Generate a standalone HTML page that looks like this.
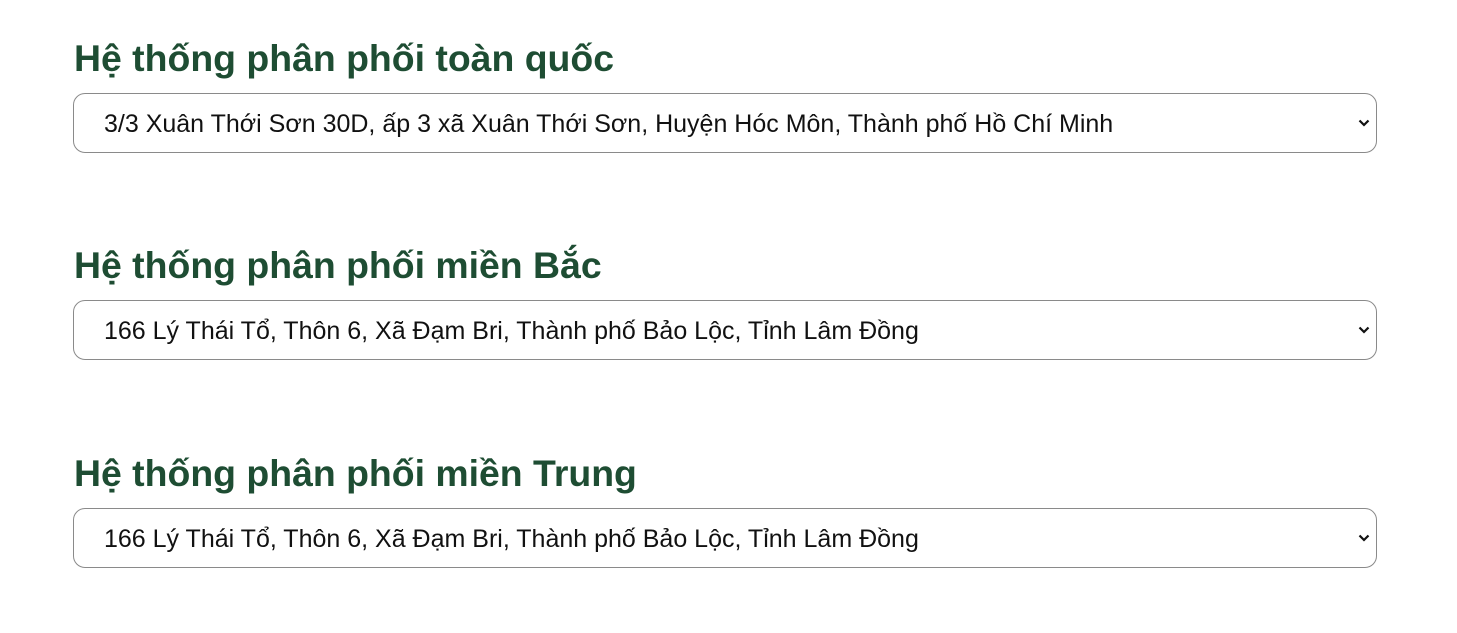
<!DOCTYPE html>
<html><head><meta charset="utf-8"><style>
body{margin:0;background:#fff;font-family:"Liberation Sans",Arial,sans-serif;}
.sec{position:absolute;left:73px;width:1304px;}
h2{margin:0;font-size:37.4px;font-weight:bold;color:#1e4d33;line-height:40px;position:absolute;left:1px;top:0;white-space:nowrap;}
.box{position:absolute;left:0;top:55px;border:1px solid #8a8a8a;border-radius:12px;box-sizing:border-box;width:1304px;height:60px;}
.box span{position:absolute;left:30px;top:16px;font-size:25px;color:#111;line-height:28px;white-space:nowrap;}
.box svg{position:absolute;right:6px;top:25px;}
</style></head><body>
<div class="sec" style="top:38px"><h2>Hệ thống phân phối toàn quốc</h2><div class="box"><span>3/3 Xuân Thới Sơn 30D, ấp 3 xã Xuân Thới Sơn, Huyện Hóc Môn, Thành phố Hồ Chí Minh</span><svg width="12" height="8" viewBox="0 0 12 8"><path d="M1.5 1.5 L6 6 L10.5 1.5" fill="none" stroke="#111" stroke-width="2.2"/></svg></div></div>
<div class="sec" style="top:245px"><h2>Hệ thống phân phối miền Bắc</h2><div class="box"><span>166 Lý Thái Tổ, Thôn 6, Xã Đạm Bri, Thành phố Bảo Lộc, Tỉnh Lâm Đồng</span><svg width="12" height="8" viewBox="0 0 12 8"><path d="M1.5 1.5 L6 6 L10.5 1.5" fill="none" stroke="#111" stroke-width="2.2"/></svg></div></div>
<div class="sec" style="top:453px"><h2>Hệ thống phân phối miền Trung</h2><div class="box"><span>166 Lý Thái Tổ, Thôn 6, Xã Đạm Bri, Thành phố Bảo Lộc, Tỉnh Lâm Đồng</span><svg width="12" height="8" viewBox="0 0 12 8"><path d="M1.5 1.5 L6 6 L10.5 1.5" fill="none" stroke="#111" stroke-width="2.2"/></svg></div></div>
</body></html>
